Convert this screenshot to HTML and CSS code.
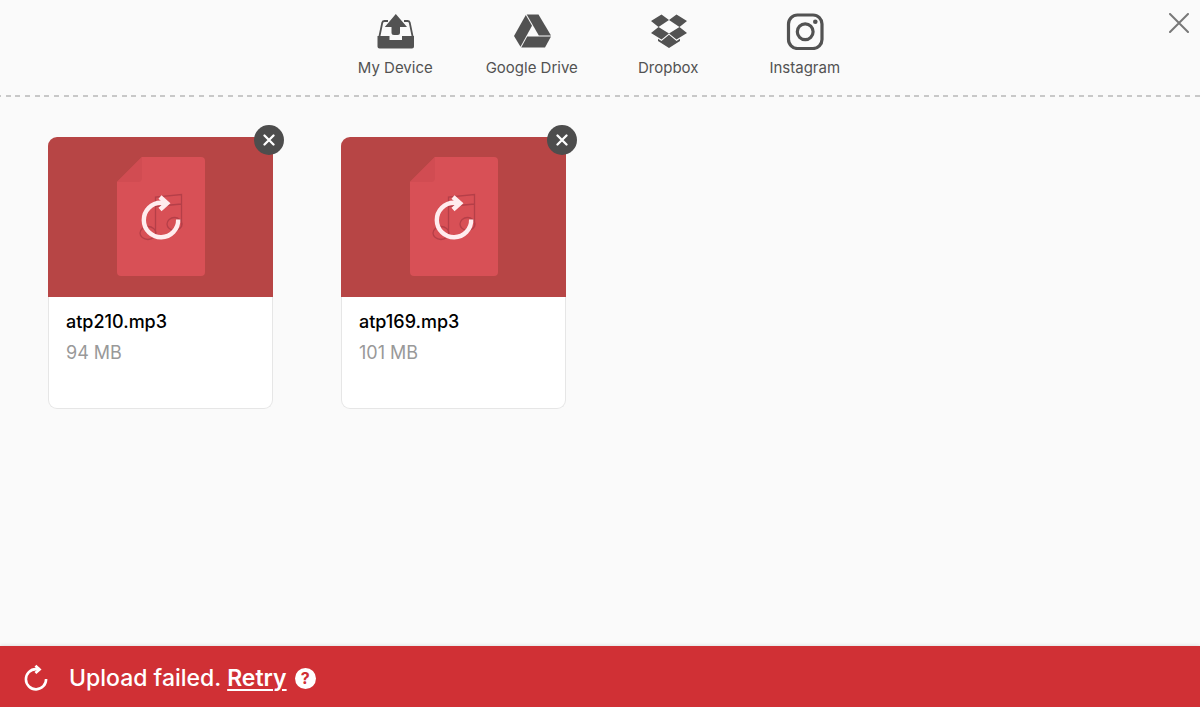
FILE: index.html
```html
<!DOCTYPE html>
<html lang="en">
<head>
<meta charset="utf-8">
<meta name="viewport" content="width=device-width, initial-scale=1">
<title>File upload</title>
<link rel="stylesheet" href="styles.css">
</head>
<body>
<svg class="symbols" aria-hidden="true">
  <symbol id="file" viewBox="0 0 88 120">
    <path d="M25 0H84Q88 0 88 4V115Q88 119 84 119H4Q0 119 0 115V25Z" fill="#d85056"/>
    <path d="M25 0V21Q25 25 21 25H0Z" fill="#d14c52"/>
    <g fill="none" stroke="#b53f48" stroke-width="1.3">
      <path d="M38.500 76V40L64.500 37.500V70M38.500 49.500L64.500 47"/>
      <ellipse cx="31" cy="76" rx="8" ry="6.500"/>
      <ellipse cx="57.500" cy="67" rx="7.500" ry="6.500"/>
    </g>
  </symbol>
  <symbol id="reload" viewBox="0 0 40 46">
    <path d="M37.200 25.500A17.200 17.200 0 1 1 20 8.800H26" fill="none" stroke="currentColor" stroke-width="4.400"/>
    <path d="M19 3L26 9.200L19 15.500" fill="none" stroke="currentColor" stroke-width="4.600"/>
  </symbol>
  <symbol id="cross" viewBox="0 0 12 12">
    <path d="M1.500 1.500L10.500 10.500M10.500 1.500L1.500 10.500" fill="none" stroke="currentColor" stroke-width="2.300" stroke-linecap="round"/>
  </symbol>
</svg>
<div class="uploader">
  <header class="sources">
    <nav class="source-list" aria-label="Upload sources">
      <button class="source" type="button">
        <svg class="source-icon" viewBox="-1 -0.5 38 38" aria-hidden="true">
          <path d="M11 8.500H7.500Q5.700 8.500 5.300 10L2 26M27 8.500H30.500Q32.300 8.500 32.700 10L36 26" fill="none" stroke="currentColor" stroke-width="1.800"/>
          <path d="M.5 23.500H12.500V27.500H25V23.500H37V34Q37 36 35 36H2.500Q.5 36 .5 34Z" fill="currentColor"/>
          <path d="M18.800 1.500L30 14.500H23V20Q23 22.500 20.500 22.500H17Q14.500 22.500 14.500 20V14.500H7.800Z" fill="currentColor"/>
        </svg>
        <span>My Device</span>
      </button>
      <button class="source" type="button">
        <svg class="source-icon" viewBox="-0.5 -0.5 38 38" aria-hidden="true">
          <g fill="currentColor">
            <path d="M12.300 2.500L18.500 13.200L7 34.200L.5 23.500Z"/>
            <path d="M13.200 2H25L37.500 23H25.300Z"/>
            <path d="M13.700 24H37.500L31.500 35H7.700Z"/>
          </g>
        </svg>
        <span>Google Drive</span>
      </button>
      <button class="source" type="button">
        <svg class="source-icon" viewBox="-1 -0.5 38 38" aria-hidden="true">
          <path d="M11.500 2L19 7.500L8.500 14.500L1 8.500ZM26.500 2L37 8.500L29.500 14.500L19 7.500ZM8.500 14.500L19 21L11.500 27L1 20.500ZM29.500 14.500L37 20.500L26.500 27L19 21ZM19 22.200L26.500 28.500L30 26.300V28.500L19 35.500L8 28.500V26.300L11.500 28.500Z" fill="currentColor"/>
        </svg>
        <span>Dropbox</span>
      </button>
      <button class="source" type="button">
        <svg class="source-icon" viewBox="0 -0.5 38 38" aria-hidden="true">
          <g fill="none" stroke="currentColor" stroke-width="3.200">
            <rect x="2.500" y="2.500" width="33.500" height="33.500" rx="9"/>
            <circle cx="19.200" cy="19.200" r="7.900"/>
          </g>
          <circle cx="29.300" cy="9.300" r="2.300" fill="currentColor"/>
        </svg>
        <span>Instagram</span>
      </button>
    </nav>
    <button class="close" type="button" aria-label="Close">
      <svg class="close-icon" viewBox="0 0 20 20" aria-hidden="true"><path d="M1 1L19 19M19 1L1 19" fill="none" stroke="currentColor" stroke-width="2" stroke-linecap="round"/></svg>
    </button>
  </header>
  <main class="files">
    <article class="card">
      <button class="preview" type="button" aria-label="Retry atp210.mp3">
        <svg class="file-icon" aria-hidden="true"><use href="#file"/></svg>
        <svg class="retry-icon" aria-hidden="true"><use href="#reload"/></svg>
      </button>
      <button class="remove" type="button" aria-label="Remove atp210.mp3"><svg class="remove-icon" aria-hidden="true"><use href="#cross"/></svg></button>
      <div class="details">
        <h2 class="name">atp210.mp3</h2>
        <p class="size">94 MB</p>
      </div>
    </article>
    <article class="card">
      <button class="preview" type="button" aria-label="Retry atp169.mp3">
        <svg class="file-icon" aria-hidden="true"><use href="#file"/></svg>
        <svg class="retry-icon" aria-hidden="true"><use href="#reload"/></svg>
      </button>
      <button class="remove" type="button" aria-label="Remove atp169.mp3"><svg class="remove-icon" aria-hidden="true"><use href="#cross"/></svg></button>
      <div class="details">
        <h2 class="name">atp169.mp3</h2>
        <p class="size">101 MB</p>
      </div>
    </article>
  </main>
  <footer class="status" role="status">
    <svg class="status-icon" aria-hidden="true"><use href="#reload"/></svg>
    <span class="message">Upload failed. <a class="retry" href="#">Retry</a></span>
    <button class="help" type="button" aria-label="Help">?</button>
  </footer>
</div>
</body>
</html>
```
FILE: styles.css
```css
* { box-sizing: border-box; }
body {
  margin: 0;
  background: #fafafa;
  color: #525252;
  font-family: Inter, "Liberation Sans", sans-serif;
}
button {
  margin: 0;
  padding: 0;
  border: 0;
  background: none;
  color: inherit;
  font: inherit;
  cursor: pointer;
}
svg { display: block; }
.symbols { position: absolute; width: 0; height: 0; }
.uploader {
  display: flex;
  flex-direction: column;
  min-height: 100vh;
}
.sources {
  position: relative;
  padding: 12px 0 20px;
}
/* Dashed rule under the source list */
.sources::after {
  content: "";
  position: absolute;
  inset: auto 0 0;
  height: 2px;
  background: repeating-linear-gradient(90deg,
    #c8c8c8 0 1px, transparent 1px 6px,
    #c8c8c8 6px 11px, transparent 11px 15px,
    #c8c8c8 15px 20px, transparent 20px 25px,
    #c8c8c8 25px 29px);
}
.source-list {
  display: grid;
  grid-template-columns: repeat(4, 1fr);
  max-width: 546px;
  margin: 0 auto;
}
.source {
  display: flex;
  flex-direction: column;
  align-items: center;
  gap: 8px;
  font-size: 15px;
  line-height: 19px;
}
.source-icon { width: 38px; height: 38px; }
.close {
  position: absolute;
  top: 13px;
  right: 11px;
  color: #787878;
}
.close-icon { width: 20px; height: 20px; }
.files {
  flex: 1;
  display: grid;
  grid-template-columns: repeat(auto-fill, 225px);
  justify-content: space-between;
  align-content: start;
  gap: 40px 60px;
  padding: 40px 48px;
}
.card { position: relative; }
.preview {
  display: grid;
  place-items: center;
  width: 100%;
  height: 160px;
  border-radius: 9px 9px 0 0;
  background: #b74545;
}
.preview > * { grid-area: 1 / 1; }
.file-icon { width: 88px; height: 120px; }
.retry-icon { width: 40px; height: 46px; color: #ffecee; }
.remove {
  position: absolute;
  top: -12px;
  right: -11px;
  display: grid;
  place-items: center;
  width: 30px;
  height: 30px;
  border-radius: 50%;
  background: #4d4d4d;
  color: #fff;
}
.remove-icon { width: 12px; height: 12px; }
.details {
  min-height: 112px;
  padding: 12px 17px;
  border: 1px solid #e6e6e6;
  border-top: 0;
  border-radius: 0 0 9px 9px;
  background: #fff;
}
.name, .size {
  margin: 0;
  font-size: 18px;
  line-height: 26px;
}
.name { color: #000; font-weight: 500; }
.size { margin-top: 5px; color: #999; font-weight: 400; }
.status {
  display: flex;
  align-items: center;
  padding: 18px 24px 14px;
  background: #d03035;
  color: #fff;
  box-shadow: 0 0 4px rgba(0, 0, 0, 0.15);
}
.status-icon { width: 24px; height: 27px; margin: 0 21px 2px 0; }
.message {
  font-size: 23px;
  font-weight: 500;
  line-height: 29px;
}
.retry {
  color: inherit;
  font-weight: 600;
  text-underline-offset: 3px;
  text-decoration-thickness: 2px;
}
.help {
  width: 21px;
  height: 21px;
  margin-left: 8px;
  border-radius: 50%;
  background: #fff;
  color: #d03035;
  font-size: 16px;
  font-weight: 700;
  line-height: 21px;
  text-align: center;
}
```
